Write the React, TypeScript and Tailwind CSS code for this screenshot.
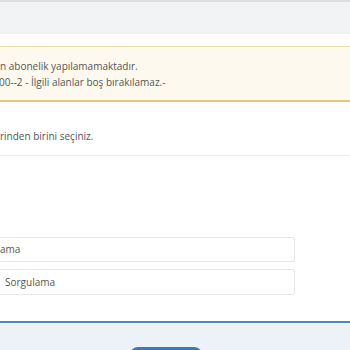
export default function App() {
  return (
    <div
      className="w-[350px] h-[350px] overflow-hidden bg-white text-[#555] relative"
      style={{ fontFamily: '"Open Sans", "Noto Sans", sans-serif' }}
    >
      {/* Top bar */}
      <div className="h-[34px] bg-[#f2f3f5] border-t-2 border-[#dcdde0] border-b border-b-[#f3eef0]" />

      {/* Warning alert */}
      <div className="mt-[12px] h-[56px] bg-[#fef9ee] border-t border-[#ecdcae] border-b-2 border-b-[#e9c77a] flex flex-col justify-center text-[10px] leading-[16px] whitespace-nowrap">
        <div>n abonelik yapılamamaktadır.</div>
        <div className="-ml-[1px]">00--2 - İlgili alanlar boş bırakılamaz.-</div>
      </div>

      {/* Info text */}
      <div className="h-[54px] border-b border-[#ececec] flex items-center pt-[16px] text-[10px] whitespace-nowrap">
        <div>rinden birini seçiniz.</div>
      </div>

      {/* Inputs */}
      <div className="mt-[81px] w-[295px] flex flex-col gap-[7px] text-[10px] whitespace-nowrap">
        <div className="h-[25px] border border-[#e6e6e6] rounded-r-[3px] border-l-0 flex items-center">
          ama
        </div>
        <div className="h-[26px] border border-[#e6e6e6] rounded-r-[3px] border-l-0 flex items-center pl-[5px]">
          Sorgulama
        </div>
      </div>

      {/* Footer */}
      <div className="mt-[26px] border-t-2 border-[#4d88b6] bg-[#edf2f8] h-[40px] flex justify-center">
        <div className="mt-[24px] w-[72px] h-[20px] rounded-[8px] bg-[#3d79b6] ml-[-18px]" />
      </div>
    </div>
  );
}
